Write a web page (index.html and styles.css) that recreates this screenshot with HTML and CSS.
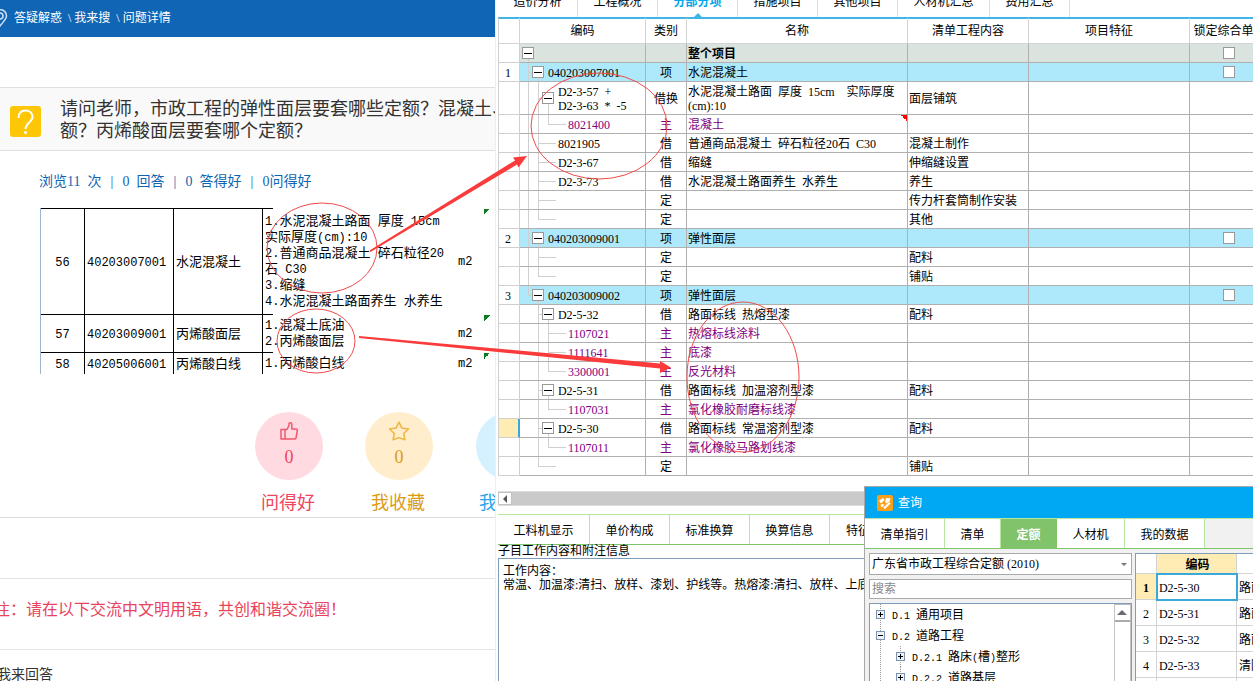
FILE: index.html
```html
<!DOCTYPE html>
<html lang="zh-CN">
<head>
<meta charset="utf-8">
<title>问题详情</title>
<link rel="stylesheet" href="styles.css">
</head>
<body>
<main class="question">
  <nav class="crumbs">
    <svg class="pin" width="16" height="18" viewBox="0 0 16 18" fill="none" stroke="#cfe2f5" stroke-width="1.5"><path d="M8 17C4 12 1.500 10 1.500 7a6.500 6.500 0 0 1 13 0c0 3-2.500 5-6.500 10z"/><circle cx="8" cy="7" r="3"/></svg>
    <a href="#">答疑解惑</a><a href="#">\ 我来搜</a><a href="#">\ 问题详情</a>
  </nav>
  <section class="ask">
    <svg class="ask-icon" width="31" height="31" viewBox="0 0 31 31"><rect width="31" height="31" rx="3" fill="#fdc707"/><path d="M8.500 12C8.500 7 11.500 4.500 15.500 4.500S22.500 7 22.500 11c0 5-7 6-7 12" fill="none" stroke="#fff" stroke-width="2"/><circle cx="15.500" cy="26.500" r="1.600" fill="#fff"/></svg>
    <h1>请问老师，市政工程的弹性面层要套哪些定额？混凝土、<br>额？丙烯酸面层要套哪个定额？</h1>
  </section>
  <div class="stats"><span>浏览<b>11</b>&nbsp; 次</span><i>|</i><span><b>0</b>&nbsp; 回答</span><i>|</i><span><b>0</b>&nbsp; 答得好</span><i>|</i><span><b>0</b>问得好</span></div>
  <table class="sheet">
    <colgroup><col class="s1"><col class="s2"><col class="s2"><col><col class="s4"><col class="s5"></colgroup>
    <tr class="tall"><td class="mid">56</td><td>40203007001</td><td class="cjk">水泥混凝土</td><td class="desc">1.<span>水泥混凝土路面</span> <span>厚度</span> 15cm<br><span>实际厚度</span>(cm):10<br>2.<span>普通商品混凝土</span> <span>碎石粒径</span>20<br><span>石</span> C30<br>3.<span>缩缝</span><br>4.<span>水泥混凝土路面养生</span> <span>水养生</span></td><td class="unit">m2</td><td class="mark"></td></tr>
    <tr class="two"><td class="mid">57</td><td>40203009001</td><td class="cjk">丙烯酸面层</td><td class="desc">1.<span>混凝土底油</span><br>2.<span>丙烯酸面层</span></td><td class="unit">m2</td><td class="mark"></td></tr>
    <tr class="one"><td class="mid">58</td><td>40205006001</td><td class="cjk">丙烯酸白线</td><td class="desc">1.<span>丙烯酸白线</span></td><td class="unit">m2</td><td class="mark"></td></tr>
  </table>
  <div class="votes">
    <button class="vote pink"><span class="disc"><svg width="20" height="20" viewBox="0 0 20 20" fill="none" stroke="#f0586f" stroke-width="1.500" stroke-linejoin="round"><path d="M2 8.500h4V18H2zM6 8.500h2l2-4V2.300q2-1.300 2.800.700V8H17q1.500 0 1.300 1.500L17 17q-.300 1-1.500 1H6"/></svg><em>0</em></span>问得好</button>
    <button class="vote gold"><span class="disc"><svg width="22" height="20" viewBox="0 0 22 20" fill="none" stroke="#efb640" stroke-width="1.500" stroke-linejoin="round"><path d="M11 1.200l2.900 5.900 6.600.900-4.800 4.500 1.200 6.300-5.900-2.200-5.900 2.200 1.200-6.300L1.500 8l6.600-.900z"/></svg><em>0</em></span>我收藏</button>
    <button class="vote sky"><span class="disc"></span>我</button>
  </div>
  <div class="gap-row"></div>
  <p class="notice">注：请在以下交流中文明用语，共创和谐交流圈！</p>
  <h2 class="reply">我来回答</h2>
</main>

<section class="app">
  <nav class="tabs">
    <button>造价分析</button><button>工程概况</button><button class="on">分部分项</button><button>措施项目</button><button>其他项目</button><button class="wide">人材机汇总</button><button>费用汇总</button>
  </nav>
  <table class="grid">
    <colgroup><col class="c1"><col class="c2"><col class="c3"><col class="c4"><col class="c5"><col class="c6"><col class="c7"></colgroup>
    <thead><tr><th></th><th>编码</th><th>类别</th><th>名称</th><th>清单工程内容</th><th>项目特征</th><th>锁定综合单价</th></tr></thead>
    <tbody>
    <tr class="root"><td></td><td><div class="tree"><i class="g b"><button aria-label="折叠"></button></i></div></td><td></td><td>整个项目</td><td></td><td></td><td><input type="checkbox" aria-label="锁定整个项目"></td></tr>
    <tr class="item"><td>1</td><td><div class="tree"><i class="g t"></i><i class="g b"><button aria-label="折叠"></button></i><span>040203007001</span></div></td><td>项</td><td>水泥混凝土</td><td></td><td></td><td><input type="checkbox" aria-label="锁定1"></td></tr>
    <tr class="double"><td></td><td><div class="tree"><i class="g v"></i><i class="g t"></i><i class="g b"><button aria-label="折叠"></button></i><span>D2-3-57&nbsp; +<br>D2-3-63&nbsp; *&nbsp; -5</span></div></td><td>借换</td><td>水泥混凝土路面&nbsp; 厚度&nbsp; 15cm&nbsp; &nbsp; 实际厚度<br>(cm):10</td><td>面层铺筑</td><td></td><td></td></tr>
    <tr class="sub"><td></td><td><div class="tree"><i class="g v"></i><i class="g v"></i><i class="g l"></i><i class="leaf"></i><span>8021400</span></div></td><td>主</td><td class="note">混凝土</td><td></td><td></td><td></td></tr>
    <tr><td></td><td><div class="tree"><i class="g v"></i><i class="g t"></i><i class="leaf"></i><span>8021905</span></div></td><td>借</td><td>普通商品混凝土&nbsp; 碎石粒径20石&nbsp; C30</td><td>混凝土制作</td><td></td><td></td></tr>
    <tr><td></td><td><div class="tree"><i class="g v"></i><i class="g t"></i><i class="leaf"></i><span>D2-3-67</span></div></td><td>借</td><td>缩缝</td><td>伸缩缝设置</td><td></td><td></td></tr>
    <tr><td></td><td><div class="tree"><i class="g v"></i><i class="g t"></i><i class="leaf"></i><span>D2-3-73</span></div></td><td>借</td><td>水泥混凝土路面养生&nbsp; 水养生</td><td>养生</td><td></td><td></td></tr>
    <tr><td></td><td><div class="tree"><i class="g v"></i><i class="g t"></i><i class="leaf"></i></div></td><td>定</td><td></td><td>传力杆套筒制作安装</td><td></td><td></td></tr>
    <tr><td></td><td><div class="tree"><i class="g v"></i><i class="g l"></i><i class="leaf"></i></div></td><td>定</td><td></td><td>其他</td><td></td><td></td></tr>
    <tr class="item"><td>2</td><td><div class="tree"><i class="g t"></i><i class="g b"><button aria-label="折叠"></button></i><span>040203009001</span></div></td><td>项</td><td>弹性面层</td><td></td><td></td><td><input type="checkbox" aria-label="锁定2"></td></tr>
    <tr><td></td><td><div class="tree"><i class="g v"></i><i class="g t"></i><i class="leaf"></i></div></td><td>定</td><td></td><td>配料</td><td></td><td></td></tr>
    <tr><td></td><td><div class="tree"><i class="g v"></i><i class="g l"></i><i class="leaf"></i></div></td><td>定</td><td></td><td>铺贴</td><td></td><td></td></tr>
    <tr class="item"><td>3</td><td><div class="tree"><i class="g l"></i><i class="g b"><button aria-label="折叠"></button></i><span>040203009002</span></div></td><td>项</td><td>弹性面层</td><td></td><td></td><td><input type="checkbox" aria-label="锁定3"></td></tr>
    <tr><td></td><td><div class="tree"><i class="g"></i><i class="g t"></i><i class="g b"><button aria-label="折叠"></button></i><span>D2-5-32</span></div></td><td>借</td><td>路面标线&nbsp; 热熔型漆</td><td>配料</td><td></td><td></td></tr>
    <tr class="sub"><td></td><td><div class="tree"><i class="g"></i><i class="g v"></i><i class="g t"></i><i class="leaf"></i><span>1107021</span></div></td><td>主</td><td>热熔标线涂料</td><td></td><td></td><td></td></tr>
    <tr class="sub"><td></td><td><div class="tree"><i class="g"></i><i class="g v"></i><i class="g t"></i><i class="leaf"></i><span>1111641</span></div></td><td>主</td><td>底漆</td><td></td><td></td><td></td></tr>
    <tr class="sub"><td></td><td><div class="tree"><i class="g"></i><i class="g v"></i><i class="g l"></i><i class="leaf"></i><span>3300001</span></div></td><td>主</td><td>反光材料</td><td></td><td></td><td></td></tr>
    <tr><td></td><td><div class="tree"><i class="g"></i><i class="g t"></i><i class="g b"><button aria-label="折叠"></button></i><span>D2-5-31</span></div></td><td>借</td><td>路面标线&nbsp; 加温溶剂型漆</td><td>配料</td><td></td><td></td></tr>
    <tr class="sub"><td></td><td><div class="tree"><i class="g"></i><i class="g v"></i><i class="g l"></i><i class="leaf"></i><span>1107031</span></div></td><td>主</td><td>氯化橡胶耐磨标线漆</td><td></td><td></td><td></td></tr>
    <tr class="current"><td></td><td><div class="tree"><i class="g"></i><i class="g t"></i><i class="g b"><button aria-label="折叠"></button></i><span>D2-5-30</span></div></td><td>借</td><td>路面标线&nbsp; 常温溶剂型漆</td><td>配料</td><td></td><td></td></tr>
    <tr class="sub"><td></td><td><div class="tree"><i class="g"></i><i class="g v"></i><i class="g l"></i><i class="leaf"></i><span>1107011</span></div></td><td>主</td><td>氯化橡胶马路划线漆</td><td></td><td></td><td></td></tr>
    <tr><td></td><td><div class="tree"><i class="g"></i><i class="g l"></i><i class="leaf"></i></div></td><td>定</td><td></td><td>铺贴</td><td></td><td></td></tr>
    </tbody>
  </table>
  <div class="hscroll"><button aria-label="向左滚动"></button></div>
  <nav class="subtabs"><button>工料机显示</button><button>单价构成</button><button>标准换算</button><button>换算信息</button><button>特征</button></nav>
  <label class="memo-label" for="memo">子目工作内容和附注信息</label>
  <textarea id="memo" class="memo">工作内容：
常温、加温漆:清扫、放样、漆划、护线等。热熔漆:清扫、放样、上底</textarea>

  <section class="dialog">
    <header class="dialog-title">
      <svg width="16" height="16" viewBox="0 0 16 16"><rect width="16" height="16" rx="2" fill="#f9a01b"/><path d="M2 5.500L6 3l1.500 2L4 8.500zM9 3l4.500.500-1 3-3 2-1.500-1.500zM3.500 9.500L6.500 9l.500 1.500-2.500 2zM6 12.500L12.500 7l1 1.500L8 14z" fill="#fff"/></svg>
      查询
    </header>
    <nav class="dialog-tabs"><button class="w80">清单指引</button><button class="w56">清单</button><button class="w56 on">定额</button><button class="w68">人材机</button><button class="w80">我的数据</button></nav>
    <div class="dialog-body">
      <div class="side">
        <div class="combo"><select aria-label="定额库"><option>广东省市政工程综合定额 (2010)</option></select></div>
        <input class="search" type="text" placeholder="搜索" aria-label="搜索">
        <div class="books">
          <ul>
            <li><button class="plus" aria-label="展开"></button><span><b>D.1 </b>通用项目</span></li>
            <li><button aria-label="折叠"></button><span><b>D.2 </b>道路工程</span></li>
            <li class="deep"><button class="plus" aria-label="展开"></button><span><b>D.2.1 </b>路床<b>(</b>槽<b>)</b>整形</span></li>
            <li class="deep"><button class="plus" aria-label="展开"></button><span><b>D.2.2 </b>道路基层</span></li>
          </ul>
          <div class="vscroll"><button aria-label="向上滚动"></button></div>
        </div>
      </div>
      <table class="results">
        <colgroup><col class="r1"><col class="r2"><col class="r3"></colgroup>
        <tr><th></th><th class="hot">编码</th><th></th></tr>
        <tr class="picked"><td>1</td><td>D2-5-30</td><td>路面</td></tr>
        <tr><td>2</td><td>D2-5-31</td><td>路面</td></tr>
        <tr><td>3</td><td>D2-5-32</td><td>路面</td></tr>
        <tr><td>4</td><td>D2-5-33</td><td>清除</td></tr>
        <tr><td></td><td></td><td></td></tr>
      </table>
    </div>
  </section>
</section>

<svg class="marks" width="1253" height="681" viewBox="0 0 1253 681">
  <g fill="none" stroke="#f04a4a" stroke-width="1">
    <ellipse cx="322" cy="248" rx="55" ry="45"/>
    <ellipse cx="316" cy="341" rx="39" ry="32"/>
    <ellipse cx="599" cy="126" rx="68" ry="53"/>
    <ellipse cx="743" cy="377" rx="56" ry="75"/>
  </g>
  <g fill="#fb3b3b">
    <path d="M369.500 250.500L515 160.500 513 157.500 527 156 518.500 167.500 517 164.500 370.500 252z"/>
    <path d="M359 336L660 363.500 660 361 671 367.500 660 373 660 368.500 359 338z"/>
  </g>
</svg>
</body>
</html>
```
FILE: styles.css
```css
* { box-sizing: border-box; }
body {
  margin: 0;
  display: flex;
  height: 100vh;
  overflow: hidden;
  position: relative;
  background: #fff;
  color: #000;
  font: 12px/14px "Liberation Serif", "Noto Sans CJK SC", sans-serif;
}
button, input, select, textarea { font: inherit; color: inherit; margin: 0; }
button { border: 0; padding: 0; background: none; }
i, em { font-style: normal; }

/* question page */
.question { flex: 0 0 39.5%; min-width: 0; overflow: hidden; white-space: nowrap; }
.crumbs { display: flex; gap: 6px; align-items: center; height: 37px; padding-bottom: 2px; background: #1065b5; }
.crumbs a { color: #fff; text-decoration: none; }
.pin { flex: none; margin-left: -8px; }
.ask { display: flex; align-items: center; gap: 19px; margin-top: 50px; height: 64px; padding: 4px 0 0 10px; background: #f9f9f9; border: solid #dfdfdf; border-width: 1px 0; }
.ask-icon { flex: none; }
.ask h1 { margin: 0; padding-bottom: 2px; font-size: 18px; line-height: 22px; font-weight: 400; color: #333; }
.stats { display: flex; gap: 8px; margin: 21px 0 0 39px; font-size: 14px; line-height: 20px; color: #0d66b3; }
.stats b { font-weight: 400; }
.stats i { width: 5px; text-align: center; }

.sheet { width: 450px; margin: 16px 0 0 40px; table-layout: fixed; border-collapse: separate; border-spacing: 0; border-left: 1px solid #9db6cf; font: 12px/16px "Liberation Mono", "Noto Sans CJK SC", monospace; }
.s1 { width: 44px; }
.s2 { width: 89px; }
.s4 { width: 34px; }
.s5 { width: 6px; }
.sheet td { padding: 2px 0 0 2px; border: solid #000; border-width: 1px 1px 0 0; }
.sheet .mid { padding: 2px 0 0; text-align: center; }
.sheet .desc { border: 0; background: linear-gradient(#000, #000) no-repeat 0 0 / 10px 1px; }
.sheet .unit { border: 0; padding-left: 8px; }
.sheet .cjk, .desc span { font-size: 13px; }
.sheet .mark { border: 0; background: linear-gradient(135deg, #0a7d1c 50%, transparent 50%) no-repeat 0 1px / 6px 6px; }
.tall td { height: 106px; }
.two td { height: 38px; }
.one td { height: 22px; }

.votes { display: flex; gap: 42px; height: 144px; padding: 38px 0 0 255px; border-bottom: 1px solid #dcdcdc; }
.vote { flex: none; display: flex; flex-direction: column; align-items: center; width: 68px; padding-right: 2px; font-size: 18px; line-height: 24px; }
.disc { display: flex; flex-direction: column; align-items: center; width: 68px; height: 68px; margin: 0 -2px 11px 0; padding-top: 9px; border-radius: 50%; }
.disc em { line-height: 32px; }
.pink { color: #f0445f; }
.pink .disc { background: #ffdae0; }
.gold { color: #dc9b14; }
.gold .disc { background: #ffedcc; }
.sky { color: #2ba4ea; align-items: flex-start; padding-left: 4px; }
.sky .disc { margin-left: -3px; background: #d5f0ff; }
.gap-row { height: 61px; border-bottom: 1px solid #e3e3e3; }
.notice { margin: 0; padding-top: 1px; height: 71px; border-bottom: 1px solid #e3e3e3; text-indent: -6px; font-size: 16px; line-height: 60px; color: #e8435d; }
.reply { margin: 15px 0 0 -3px; font-size: 14px; line-height: 20px; font-weight: 400; color: #333; }

/* pricing application */
.app { flex: 1; min-width: 0; position: relative; display: flex; flex-direction: column; overflow: hidden; padding-left: 2px; border-left: 1px solid #eee; white-space: nowrap; }
.app > * { flex: none; }
.tabs { display: flex; height: 33px; margin-top: -14px; border-bottom: 2px solid #41b6e6; }
.tabs button { position: relative; width: 80px; border-right: 1px solid #ddd; }
.tabs .wide { width: 92px; }
.tabs .on { color: #00a5ec; font-weight: 700; }
.tabs .on::after { content: ""; position: absolute; left: 36px; bottom: 0; border: 4px solid transparent; border-top: 0; border-bottom-color: #41b6e6; }

.grid { width: 772px; table-layout: fixed; border-collapse: separate; border-spacing: 0; border-left: 1px solid #d0d0d0; margin-top: -1px; }
.c1 { width: 21px; }
.c2 { width: 126px; }
.c3 { width: 41px; }
.c4 { width: 221px; }
.c5 { width: 121px; }
.c6 { width: 161px; }
.c7 { width: 80px; }
.grid th { height: 26px; padding: 0; border: solid #d3d3d3; border-width: 0 1px 1px 0; font-weight: 400; }
.grid td { height: 19px; padding: 2px 0 0 1px; border: solid #b0b0b0; border-width: 0 1px 1px 0; }
.grid td:nth-child(1) { padding: 2px 2px 0 0; border-color: #d0d0d0; text-align: center; }
.grid td:nth-child(2) { padding: 0 0 0 1px; }
.grid td:nth-child(3) { padding: 2px 0 0; text-align: center; }
.grid td:nth-child(7) { padding: 0; }
.grid .root td { background: #dae3de; }
.grid .item td { background: #ade9fb; }
.grid .root td:first-child, .grid .item td:first-child { background: #fff; }
.grid .root td:nth-child(4) { font-weight: 700; }
.grid .sub { color: #800080; }
.grid .current td:first-child { background: #ffecb5; border-right: 2px solid #3aa9d8; }
.grid .note { background: linear-gradient(45deg, transparent 50%, #f00 50%) no-repeat 100% 0 / 6px 6px; }
.grid input { appearance: none; display: block; width: 12px; height: 12px; margin: 0 auto; border: 1px solid #999; background: #fff; }

/* outline guides in the code column */
.tree { display: flex; align-items: center; height: 18px; padding-left: 2px; --line: linear-gradient(#d0d0d0, #d0d0d0) no-repeat; }
.tree span { padding-top: 2px; }
.double .tree { height: 32px; }
.g { flex: none; display: flex; align-items: center; width: 10px; height: 100%; }
.v { background: var(--line) 5px 0 / 1px 100%; }
.t { background: var(--line) 5px 0 / 1px 100%, var(--line) 5px 50% / 5px 1px; }
.l { background: var(--line) 5px 0 / 1px 50%, var(--line) 5px 50% / 5px 1px; }
.b { background: var(--line) 5px 100% / 1px 50%; }
.b + span { margin-left: 5px; }
.b button { flex: none; width: 12px; height: 12px; margin-left: -1px; border: 1px solid #999; background: linear-gradient(#000, #000) no-repeat center / 8px 1px #fff; }
.leaf { width: 13px; height: 100%; margin-right: 2px; background: var(--line) 0 50% / 100% 1px; }

.hscroll { height: 15px; margin-top: 15px; background: #cacaca; border: solid #ddd; border-width: 1px 0; display: flex; }
.hscroll button { display: flex; align-items: center; justify-content: center; width: 14px; border: 1px solid #c4c4c4; background: #fff; }
.hscroll button::after { content: ""; border: 4px solid transparent; border-left: 0; border-right-color: #555; }
.subtabs { display: flex; height: 31px; margin-top: 8px; border: solid #b7e6a3; border-width: 1px 0; border-bottom-color: #7fc46b; }
.subtabs button { width: 80px; padding-top: 2px; border-right: 1px solid #b7e6a3; }
.subtabs button:first-child { width: 92px; }
.subtabs button:last-child { text-align: left; padding-left: 16px; }
.memo-label { line-height: 13px; }
.app > .memo { flex: 1; display: block; padding: 5px 4px; border: 1px solid #7f9db9; border-bottom: 0; resize: none; outline: 0; white-space: pre; overflow: hidden; }

/* lookup window */
.dialog { position: absolute; left: 368px; right: 0; top: 486px; bottom: 0; display: flex; flex-direction: column; overflow: hidden; border: solid #a8a8a8; border-width: 1px 0 0 1px; background: #f1f1f1; }
.dialog-title { flex: none; display: flex; align-items: center; gap: 5px; height: 31px; padding-left: 12px; background: #00a8f3; color: #fff; }
.dialog-tabs { flex: none; display: flex; height: 31px; border: solid #b7e6a3; border-width: 1px 0; border-bottom-color: #7fc46b; }
.dialog-tabs button { padding-top: 2px; background: #fff; border-right: 1px solid #b7e6a3; }
.dialog-tabs .on { background: #80c36a; border-color: #80c36a; color: #fff; font-weight: 700; }
.w80 { width: 80px; }
.w56 { width: 56px; }
.w68 { width: 68px; }
.dialog-body { flex: 1; min-height: 0; display: flex; gap: 3px; padding: 4px 0 0 4px; }
.side { flex: none; display: flex; flex-direction: column; gap: 4px; width: 263px; }
.combo { position: relative; height: 22px; }
.combo select { appearance: none; width: 100%; height: 100%; padding: 0 2px; border: 1px solid #aaa; border-radius: 0; background: #fff; }
.combo::after { content: ""; position: absolute; right: 5px; top: 10px; border: 3px solid transparent; border-bottom: 0; border-top-color: #777; }
.search { height: 20px; padding: 0 2px; border: 1px solid #aaa; border-radius: 0; background: #fff; }
.search::placeholder { color: #888; }
.books { flex: 1; min-height: 0; display: flex; border: solid #7f9db9; border-width: 1px 1px 0; background: #fff; }
.books ul { flex: 1; margin: 0; padding: 0 0 0 6px; list-style: none; background: repeating-linear-gradient(#999 0 1px, transparent 1px 2px) no-repeat 10px 0 / 1px 100%; }
.books li { display: flex; align-items: center; gap: 7px; height: 21px; }
.books li button { width: 9px; height: 9px; border: 1px solid #7b93b0; background: linear-gradient(#000, #000) no-repeat center / 5px 1px #eef1f6; }
.books li .plus { background: linear-gradient(#000, #000) no-repeat center / 5px 1px, linear-gradient(#000, #000) no-repeat center / 1px 5px, #eef1f6; }
.books .deep { padding-left: 20px; background: repeating-linear-gradient(#999 0 1px, transparent 1px 2px) no-repeat 24px 0 / 1px 100%; }
.books b { font: 10px "Liberation Mono", monospace; white-space: pre; }
.vscroll { width: 17px; border: solid #c4c4c4; border-width: 0 1px; background: #fff; }
.vscroll button { display: flex; align-items: center; justify-content: center; width: 100%; height: 18px; border-top: 1px solid #bbb; border-bottom: 2px solid #aaa; }
.vscroll button::after { content: ""; border: 5px solid transparent; border-top: 0; border-bottom-color: #6a6a75; }
.results { flex: none; width: 182px; align-self: flex-start; table-layout: fixed; border-collapse: separate; border-spacing: 0; border: solid #7f9db9; border-width: 1px 0 0 1px; background: #fff; }
.r1 { width: 21px; }
.r2 { width: 80px; }
.r3 { width: 80px; }
.results th, .results td { padding: 2px 0 0 2px; border: solid #d3d3d3; border-width: 0 1px 1px 0; }
.results th { height: 20px; }
.results td { height: 26px; }
.results td:first-child { padding: 2px 0 0; text-align: center; }
.results .hot, .results .picked td:first-child { background: #ffecb5; font-weight: 700; }
.results .picked td:nth-child(2) { outline: 2px solid #3aa9d8; outline-offset: -1px; }

.marks { position: absolute; left: 0; top: 0; pointer-events: none; }
```
